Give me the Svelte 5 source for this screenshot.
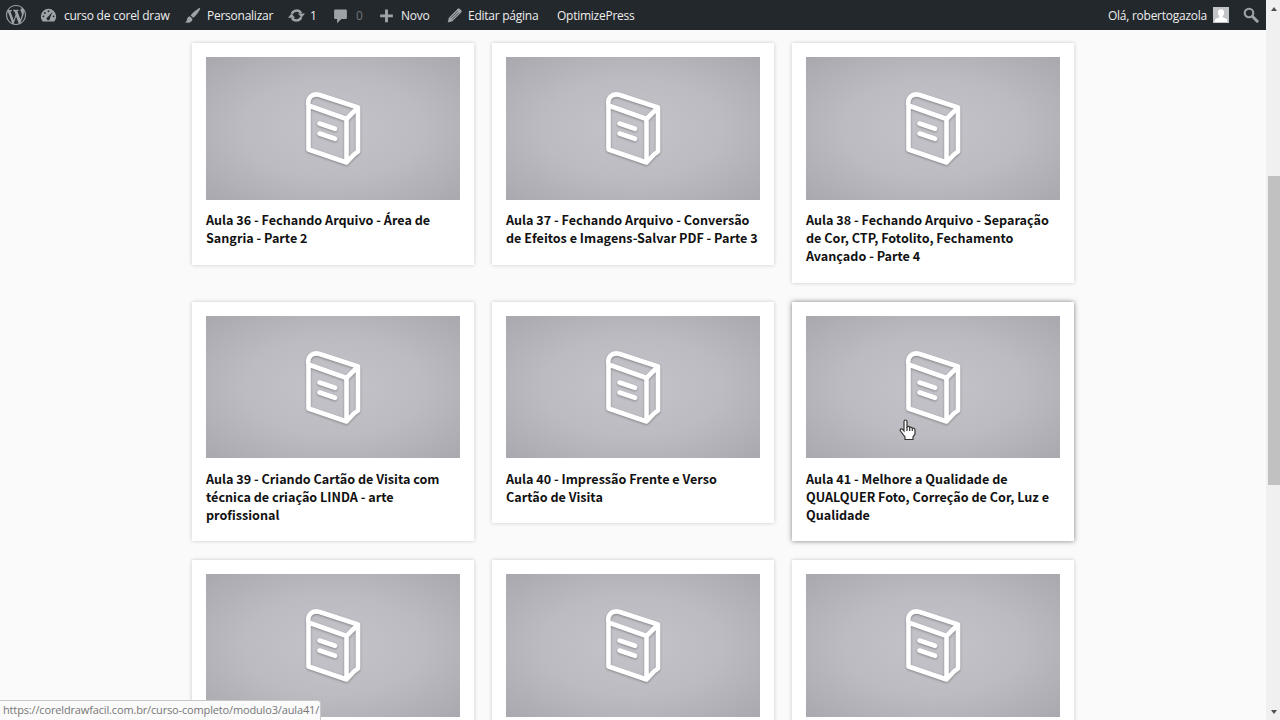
<script>
  const rows = [
    [
      { lines: ["Aula 36 - Fechando Arquivo - Área de", "Sangria - Parte 2"] },
      { lines: ["Aula 37 - Fechando Arquivo - Conversão", "de Efeitos e Imagens-Salvar PDF - Parte 3"] },
      { lines: ["Aula 38 - Fechando Arquivo - Separação", "de Cor, CTP, Fotolito, Fechamento", "Avançado - Parte 4"] },
    ],
    [
      { lines: ["Aula 39 - Criando Cartão de Visita com", "técnica de criação LINDA - arte", "profissional"] },
      { lines: ["Aula 40 - Impressão Frente e Verso", "Cartão de Visita"] },
      { lines: ["Aula 41 - Melhore a Qualidade de", "QUALQUER Foto, Correção de Cor, Luz e", "Qualidade"], active: true },
    ],
    [{ lines: [] }, { lines: [] }, { lines: [] }],
  ];
</script>

<div class="screen">
  <div class="viewport">
    <header class="adminbar">
      <div class="left">
        <svg class="wp" viewBox="0 0 20 20"><path d="M20 10c0-5.51-4.49-10-10-10C4.48 0 0 4.49 0 10c0 5.52 4.48 10 10 10 5.51 0 10-4.48 10-10zM7.78 15.37L4.37 6.22c.55-.02 1.17-.08 1.17-.08.5-.06.44-1.13-.06-1.11 0 0-1.45.11-2.37.11-.18 0-.37 0-.58-.01C4.12 2.69 6.87 1.11 10 1.11c2.33 0 4.45.87 6.05 2.34-.68-.11-1.65.39-1.65 1.58 0 .74.45 1.36.9 2.1.35.61.55 1.36.55 2.46 0 1.49-1.4 5-1.4 5l-3.03-8.37c.54-.02.82-.17.82-.17.5-.05.44-1.25-.06-1.22 0 0-1.44.12-2.38.12-.87 0-2.33-.12-2.33-.12-.5-.03-.56 1.2-.06 1.22l.92.08 1.26 3.41zM17.41 10c.24-.64.74-1.87.43-4.25.7 1.29 1.05 2.71 1.05 4.25 0 3.29-1.73 6.24-4.4 7.78.97-2.59 1.94-5.2 2.92-7.78zM6.1 18.09C3.12 16.65 1.11 13.53 1.11 10c0-1.3.23-2.48.72-3.59C3.25 10.3 4.67 14.2 6.1 18.09zm4.03-6.63l2.58 6.98c-.86.29-1.76.45-2.71.45-.79 0-1.57-.11-2.29-.33.81-2.38 1.62-4.74 2.42-7.1z" /></svg>
        <svg viewBox="0 0 20 20">
          <path d="M3.2 17A9 9 0 1 1 16.8 17Z" />
          <g fill="#23282d"><circle cx="10" cy="5" r="1.1" /><circle cx="5.7" cy="7" r="1.1" /><circle cx="4" cy="11" r="1.1" /><circle cx="16" cy="11" r="1.1" /><path d="M14.8 5.5L11.7 13a2 2 0 1 1-2.5-1.3Z" /></g>
        </svg>
        <span>curso de corel draw</span>
        <svg viewBox="0 0 20 20"><path d="M18.7 1.2c.8.8-.5 3-3 6.4-2 2.6-3.600 4.400-5 5.100L7.900 10c.8-1.400 2.500-3.200 5-5.200 3.200-2.600 5-4.300 5.800-3.600ZM7 11l2.900 2.800c.1 2.100-1 3.700-3 4.300-2 .6-4 .4-6.100.2 1.900-.8 2.200-1.700 2.600-3.400.4-2.200 1.600-3.500 3.600-3.900Z" /></svg>
        <span>Personalizar</span>
        <svg viewBox="0 0 20 20">
          <path d="M4.500 8A6 6 0 0 1 15.300 7.200M15.500 12A6 6 0 0 1 4.700 12.800" fill="none" stroke="#9ea3a8" stroke-width="2.800" />
          <path d="M11.700 7.500H20l-4.100 5zM0 12.500h8.300L4.100 7.500z" />
        </svg>
        <span>1</span>
        <svg viewBox="0 0 20 20"><path d="M4 3h12c1 0 1.500.6 1.500 1.500v8c0 .9-.6 1.500-1.500 1.500h-5l-5 5v-5H4c-.9 0-1.500-.6-1.500-1.500v-8C2.500 3.600 3.100 3 4 3Z" /></svg>
        <span class="dim">0</span>
        <svg viewBox="0 0 20 20"><path d="M8.300 3h3.400v5.800h5.800v3.400h-5.800V18H8.300v-5.800H2.500V8.800h5.800z" /></svg>
        <span>Novo</span>
        <svg viewBox="0 0 20 20"><path d="M13.500 2.300c1-1 1.900-.9 2.800 0l1.500 1.500c.9.900.9 1.700 0 2.600L7.500 16.700 2 18.300l1.400-5.800Z" /><path d="M5.500 13l8-8M7.200 14.700l8-8" fill="none" stroke="#23282d" stroke-width=".8" /></svg>
        <span>Editar página</span>
        <span>OptimizePress</span>
      </div>
      <div class="right">
        <span>Olá, robertogazola</span>
        <svg class="avatar" viewBox="0 0 16 16"><path fill="#c3c4c7" d="M0 0h16v16H0z" /><path fill="#fff" d="M8 2.200c2.200 0 3.300 1.500 3.100 3.700-.1 1.400-.6 2.400-1.400 3.100v1.200l3.900 1.900.9 2.900h-13l.9-2.900 3.900-1.900V9C5.500 8.300 5 7.300 4.900 5.900 4.700 3.700 5.800 2.200 8 2.200Z" /></svg>
        <svg class="search" viewBox="0 0 16 16"><circle cx="6" cy="6" r="4.300" fill="none" stroke="#9ea3a8" stroke-width="2.100" /><path d="m9.300 9.300 4.900 4.900" stroke="#9ea3a8" stroke-width="3" stroke-linecap="round" /></svg>
      </div>
    </header>

    <main>
      {#each rows as row}
        <div class="row">
          {#each row as lesson}
            <article class="card" class:active={lesson.active}>
              <div class="thumb">
                <svg class="book" viewBox="0 0 60 80">
                  <path d="M5.500 16.500V60.500L43.500 73.500V30L5.500 16.500C4 9 9 4 16 5.800L55 18.500V62.500L51 65.500l-7.500 8M43.500 30l11.500-11.500" />
                  <path d="m16.500 34.500 15.500 5.300M16.500 44.500l15.500 5.300" class="rule" />
                </svg>
                {#if lesson.active}
                  <svg class="hand" viewBox="0 0 18 22"><path d="M5 12V2.500c0-2 3-2 3 0V8c.8-1 2.500-.6 2.700.5 1-.7 2.400-.2 2.600.8 1.400-.5 2.700.3 2.700 1.700V15l-2 3v2.500H6V18l-4.500-6c-1-1.800 1-2.700 2-1.600Z" /><path d="M8 8v4M10.700 8.500V12M13.300 9.500V12" /></svg>
                {/if}
              </div>
              <h3>
                {#each lesson.lines as line}
                  <span>{line}</span>
                {/each}
              </h3>
            </article>
          {/each}
        </div>
      {/each}
    </main>
  </div>

  <aside class="scrollbar">
    <div class="arrow up"></div>
    <div class="handle"></div>
    <div class="arrow down"></div>
  </aside>

  <div class="status">https://coreldrawfacil.com.br/curso-completo/modulo3/aula41/</div>
</div>

<style>
  :global(body) {
    overflow: hidden;
  }

  .screen {
    position: relative;
    display: flex;
    width: 1280px;
    height: 720px;
    overflow: hidden;
    background: #fafafa;
  }

  .viewport {
    width: 1266px;
    height: 720px;
    overflow: hidden;
  }

  .adminbar {
    display: flex;
    justify-content: space-between;
    height: 30px;
    background: #23282d;
    color: #eee;
    font: 12px/30px "Open Sans", "Noto Sans", sans-serif;
    letter-spacing: -0.25px;
    white-space: nowrap;
  }

  .adminbar span {
    padding-top: 1px;
  }

  .left {
    display: grid;
    grid-template-columns: 34px 24px 120px 23px 81px 22px 22px 22px 24px 23px 45px 22px 89px 90px;
    grid-template-rows: 30px;
    align-items: center;
    padding-left: 6px;
  }

  .right {
    display: flex;
    align-items: center;
    padding-right: 7px;
  }

  .adminbar svg {
    width: 17px;
    height: 17px;
    fill: #9ea3a8;
  }

  .adminbar .wp {
    width: 20px;
    height: 20px;
  }

  .adminbar .avatar {
    width: 16px;
    height: 16px;
    margin: 0 14px 0 6px;
  }

  .adminbar .search {
    width: 16px;
    height: 16px;
  }

  .adminbar .dim {
    padding-left: 2px;
    color: #72777c;
  }

  main {
    display: flex;
    flex-direction: column;
    gap: 18.7px;
    padding: 13px 0 0 192px;
  }

  .row {
    display: flex;
    align-items: flex-start;
    gap: 18px;
  }

  .card {
    box-sizing: border-box;
    width: 282px;
    padding: 14px 14px 17.9px;
    background: #fff;
    box-shadow: 0 0 4px rgba(0, 0, 0, 0.2);
  }

  .card.active {
    box-shadow: 0 0 5px rgba(0, 0, 0, 0.5);
  }

  .thumb {
    position: relative;
    display: flex;
    justify-content: center;
    width: 254px;
    height: 142.5px;
    background: radial-gradient(ellipse at center, #c3c3c9 0%, #bbbbc1 50%, #a8a8ae 100%);
  }

  .book {
    width: 60px;
    height: 80px;
    margin-top: 32px;
    fill: none;
    stroke: #fff;
    stroke-width: 4.6;
    stroke-linejoin: round;
    filter: drop-shadow(0 1px 1px rgba(0, 0, 0, 0.3));
  }

  .rule {
    stroke-linecap: round;
  }

  .hand {
    position: absolute;
    left: 93px;
    top: 103px;
    width: 18px;
    height: 22px;
    fill: #fff;
    stroke: #333;
    stroke-width: 1.2;
  }

  h3 {
    margin: 11.5px 0 0;
    color: #111;
    font: bold 12.6px/18px "Noto Sans CJK SC", sans-serif;
    white-space: nowrap;
  }

  h3 span {
    display: block;
    height: 18px;
  }

  .scrollbar {
    display: flex;
    flex-direction: column;
    width: 14px;
    height: 720px;
    background: #f0f0f0;
  }

  .arrow {
    width: 0;
    height: 0;
    margin-left: 5px;
    border: 3px solid transparent;
  }

  .up {
    margin-top: 4px;
    border-bottom: 4px solid #505050;
  }

  .handle {
    height: 309px;
    margin: 165px 0 0 2px;
    background: #c1c1c1;
  }

  .down {
    margin-top: 225px;
    border-top: 4px solid #505050;
  }

  .status {
    position: absolute;
    left: 0;
    bottom: 0;
    box-sizing: border-box;
    width: 321px;
    height: 20px;
    padding-left: 3px;
    border: 1px solid #c8c8c8;
    border-width: 1px 1px 0 0;
    border-top-right-radius: 3px;
    background: #fafafa;
    color: #777;
    font: 11px/18px "Open Sans", "Noto Sans", sans-serif;
    letter-spacing: -0.15px;
    white-space: nowrap;
  }
</style>
